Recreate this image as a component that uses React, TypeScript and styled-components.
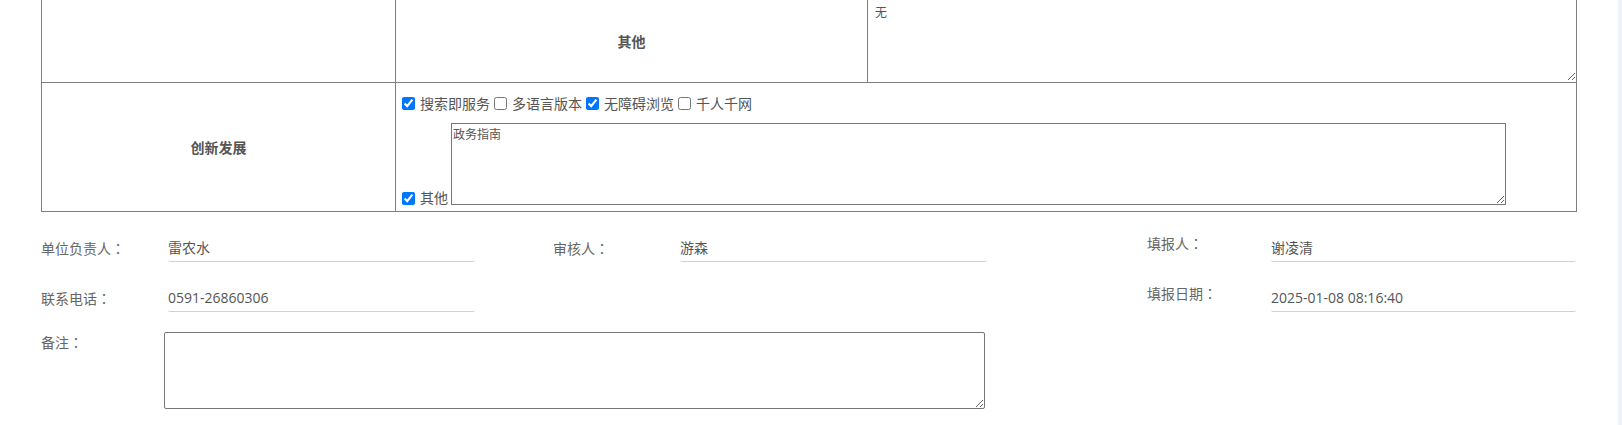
import React from "react";
import styled, { createGlobalStyle } from "styled-components";

const GlobalStyle = createGlobalStyle`
  html, body { margin: 0; padding: 0; background: #fff; overflow: hidden; }
  body {
    font-family: "Noto Sans CJK SC", "Microsoft YaHei", sans-serif;
    font-size: 14px;
    color: #666;
  }
  * { box-sizing: border-box; }
`;

const Page = styled.div`
  display: flex;
  width: 1622px;
  height: 425px;
  overflow: hidden;
`;

const Main = styled.main`
  flex: 1;
  padding-left: 41px;
`;

const ScrollTrack = styled.div`
  width: 4px;
  background: #eef2f9;
`;

const Grid = styled.table`
  border-collapse: collapse;
  table-layout: fixed;
  width: 1535px;
  color: #555;
`;

const Row = styled.tr<{ $first?: boolean }>`
  & > td {
    border-top: ${(p) => (p.$first ? "none" : "1px solid #7f7f7f")};
  }
`;

const Cell = styled.td<{ $h: number }>`
  border: 1px solid #7f7f7f;
  padding: 0;
  height: ${(p) => p.$h}px;
  vertical-align: middle;
`;

const HeadCell = styled(Cell)`
  text-align: center;
  font-weight: bold;
  font-size: 14px;
  line-height: 20px;
  color: #555;
`;

const OptionsCell = styled(Cell)`
  padding: 10px 2px 4px 2px;
  vertical-align: top;
`;

const CellArea = styled.textarea`
  display: block;
  width: 100%;
  height: 81px;
  border: none;
  outline: none;
  padding: 4px 7px;
  font-family: "Noto Sans CJK SC", sans-serif;
  font-size: 12px;
  line-height: 16px;
  color: #555;
  background: transparent;
`;

const OptionLine = styled.div`
  display: flex;
  align-items: center;
  height: 21px;
  line-height: 21px;
  color: #555;
`;

const OtherLine = styled.div`
  display: flex;
  align-items: flex-end;
  margin-top: 9px;
  color: #555;
`;

const Check = styled.input.attrs({ type: "checkbox" })<{ $bottom?: boolean }>`
  width: 13px;
  height: 13px;
  margin: ${(p) => (p.$bottom ? "0 5px 0 4px" : "3px 5px 3px 4px")};
  flex: none;
`;

const OptionText = styled.span<{ $tight?: boolean }>`
  font-size: 14px;
  line-height: ${(p) => (p.$tight ? "15px" : "21px")};
  white-space: nowrap;
`;

const OtherArea = styled.textarea`
  width: 1055px;
  height: 82px;
  margin: 0 0 0 3px;
  border: 1px solid #767676;
  padding: 2px 1px;
  font-family: "Noto Sans CJK SC", sans-serif;
  font-size: 12px;
  line-height: 15px;
  color: #555;
  outline: none;
`;

const FieldGrid = styled.div`
  display: grid;
  grid-template-columns: 127px 307px 78px 127px 307px 160px 124px 305px;
  grid-auto-rows: 50px;
  align-items: end;
`;

const FieldLabel = styled.div<{ $lift?: boolean }>`
  font-size: 14px;
  line-height: 20px;
  padding-bottom: ${(p) => (p.$lift ? 9 : 4)}px;
  color: #666;
  white-space: nowrap;
`;

const Colon = styled.span`
  font-family: "Noto Sans CJK TC", "Noto Sans CJK SC", sans-serif;
`;

const FieldValue = styled.div`
  font-family: "Open Sans", "Noto Sans CJK SC", sans-serif;
  font-size: 14px;
  line-height: 20px;
  padding-bottom: 3px;
  border-bottom: 1px solid #d2d2d2;
  border-radius: 2px;
  color: #555;
  white-space: nowrap;
`;

const Spacer = styled.div``;

const RemarkRow = styled.div`
  display: grid;
  grid-template-columns: 123px 821px;
  align-items: start;
  margin-top: 20px;
`;

const RemarkArea = styled.textarea`
  width: 821px;
  height: 77px;
  margin: 0;
  border: 1px solid #767676;
  border-radius: 2px;
  padding: 2px;
  font-family: "Noto Sans CJK SC", sans-serif;
  font-size: 12px;
  outline: none;
`;

const options = [
  { label: "搜索即服务", checked: true },
  { label: "多语言版本", checked: false },
  { label: "无障碍浏览", checked: true },
  { label: "千人千网", checked: false },
];

function Label({ text, lift }: { text: string; lift?: boolean }) {
  return (
    <FieldLabel $lift={lift}>
      {text}
      <Colon>：</Colon>
    </FieldLabel>
  );
}

export default function App() {
  return (
    <>
      <GlobalStyle />
      <Page>
        <Main>
          <Grid>
            <colgroup>
              <col style={{ width: 354 }} />
              <col style={{ width: 472 }} />
              <col style={{ width: 709 }} />
            </colgroup>
            <tbody>
              <Row $first>
                <Cell $h={82} />
                <HeadCell $h={82}>其他</HeadCell>
                <Cell $h={82}>
                  <CellArea defaultValue="无" />
                </Cell>
              </Row>
              <Row>
                <HeadCell $h={129}>创新发展</HeadCell>
                <OptionsCell $h={129} colSpan={2}>
                  <OptionLine>
                    {options.map((o) => (
                      <React.Fragment key={o.label}>
                        <Check defaultChecked={o.checked} />
                        <OptionText>{o.label}</OptionText>
                      </React.Fragment>
                    ))}
                  </OptionLine>
                  <OtherLine>
                    <Check $bottom defaultChecked />
                    <OptionText $tight>其他</OptionText>
                    <OtherArea defaultValue="政务指南" />
                  </OtherLine>
                </OptionsCell>
              </Row>
            </tbody>
          </Grid>
          <FieldGrid>
            <Label text="单位负责人" />
            <FieldValue>雷农水</FieldValue>
            <Spacer />
            <Label text="审核人" />
            <FieldValue>游森</FieldValue>
            <Spacer />
            <Label text="填报人" lift />
            <FieldValue>谢凌清</FieldValue>

            <Label text="联系电话" />
            <FieldValue>0591-26860306</FieldValue>
            <Spacer />
            <Spacer />
            <Spacer />
            <Spacer />
            <Label text="填报日期" lift />
            <FieldValue>2025-01-08 08:16:40</FieldValue>
          </FieldGrid>
          <RemarkRow>
            <Label text="备注" />
            <RemarkArea />
          </RemarkRow>
        </Main>
        <ScrollTrack />
      </Page>
    </>
  );
}
